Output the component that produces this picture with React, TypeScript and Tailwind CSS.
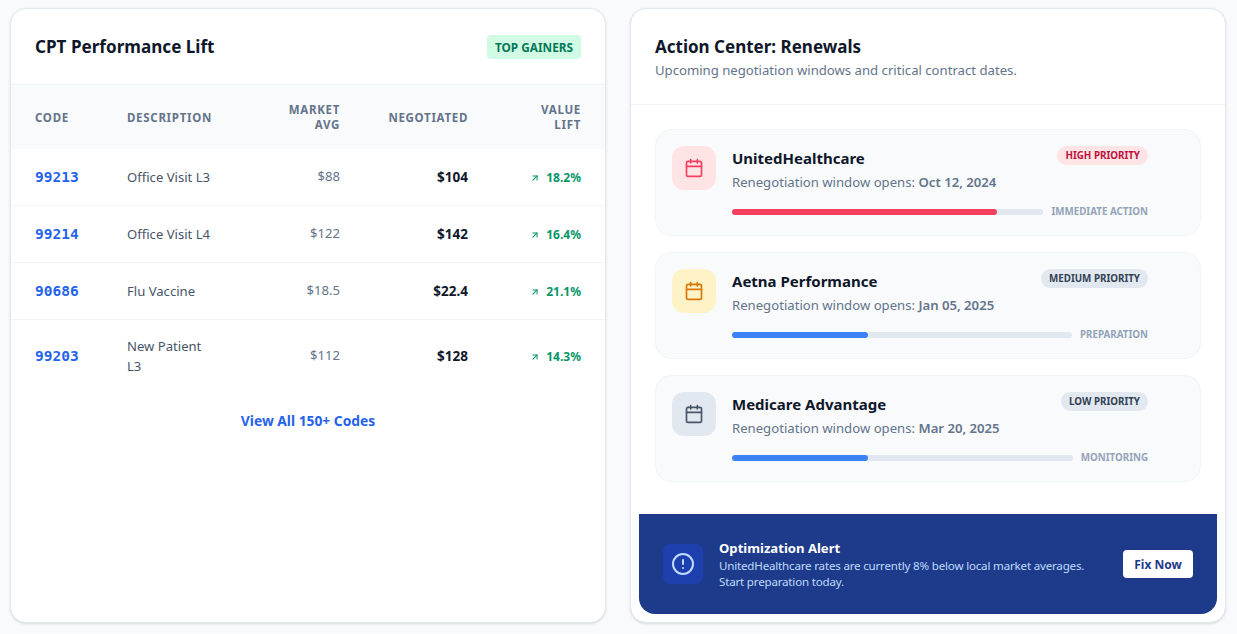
import { AlertCircle, ArrowUpRight, Calendar } from "lucide-react";

const rows = [
  { code: "99213", desc: "Office Visit L3", avg: "$88", neg: "$104", lift: "18.2%", h: "h-[56px] border-b border-slate-100" },
  { code: "99214", desc: "Office Visit L4", avg: "$122", neg: "$142", lift: "16.4%", h: "h-[57px] border-b border-slate-100" },
  { code: "90686", desc: "Flu Vaccine", avg: "$18.5", neg: "$22.4", lift: "21.1%", h: "h-[57px] border-b border-slate-100" },
  { code: "99203", desc: "New Patient L3", avg: "$112", neg: "$128", lift: "14.3%", h: "h-[73px]" },
];

const renewals = [
  {
    name: "UnitedHealthcare",
    date: "Oct 12, 2024",
    priority: "HIGH PRIORITY",
    badge: "bg-[#ffe4e6] text-[#be123c]",
    iconBox: "bg-[#ffe4e6] text-[#f43f5e]",
    bar: "bg-[#f43f5e] w-[85%]",
    label: "IMMEDIATE ACTION",
  },
  {
    name: "Aetna Performance",
    date: "Jan 05, 2025",
    priority: "MEDIUM PRIORITY",
    badge: "bg-[#e2e8f0] text-[#334155]",
    iconBox: "bg-[#fef3c7] text-[#d97706]",
    bar: "bg-[#3b82f6] w-[136px]",
    label: "PREPARATION",
  },
  {
    name: "Medicare Advantage",
    date: "Mar 20, 2025",
    priority: "LOW PRIORITY",
    badge: "bg-[#e2e8f0] text-[#334155]",
    iconBox: "bg-[#e2e8f0] text-[#475569]",
    bar: "bg-[#3b82f6] w-[136px]",
    label: "MONITORING",
  },
];

function RenewalItem({ item }: { item: any }) {
  return (
    <div className="flex h-[107px] gap-4 rounded-2xl border border-slate-100 bg-[#f8fafc] pl-4 pr-[52px] pt-4">
      <div className={`flex h-11 w-11 shrink-0 items-center justify-center rounded-xl ${item.iconBox}`}>
        <Calendar size={20} />
      </div>
      <div className="min-w-0 flex-1">
        <div className="flex items-start justify-between">
          <h3 className="pt-[2px] text-[15px] font-bold leading-[21px] text-[#0f172a]">{item.name}</h3>
          <span className={`rounded-full px-2 py-[3px] text-[9.8px] font-bold leading-[13px] ${item.badge}`}>{item.priority}</span>
        </div>
        <p className="mt-[3px] text-[13.15px] leading-5 text-[#64748b]">
          Renegotiation window opens: <span className="font-semibold">{item.date}</span>
        </p>
        <div className="mt-[13px] flex items-center gap-2">
          <div className="h-[6px] flex-1 rounded-full bg-[#e2e8f0]">
            <div className={`h-full rounded-full ${item.bar}`}></div>
          </div>
          <span className="text-[9.8px] font-bold text-[#94a3b8]">{item.label}</span>
        </div>
      </div>
    </div>
  );
}

export default function App() {
  return (
    <div className="min-h-screen bg-[#f8fafc] font-['Noto_Sans',sans-serif]">
      <div className="ml-[10px] grid h-[634px] w-[1216px] grid-cols-2 gap-6 pb-[11px] pt-2">
        {/* left card */}
        <div className="overflow-hidden rounded-2xl border border-slate-200 bg-white shadow-sm">
          <div className="flex h-[76px] items-center justify-between border-b border-slate-100 px-6">
            <h2 className="text-[17.1px] font-bold text-[#0f172a]">CPT Performance Lift</h2>
            <span className="rounded bg-[#d1fae5] px-2 py-1 text-[11.8px] font-bold leading-4 text-[#047857]">TOP GAINERS</span>
          </div>
          <table className="w-full table-fixed border-collapse">
            <colgroup>
              <col className="w-[92px]" />
              <col className="w-[133px]" />
              <col className="w-[128px]" />
              <col className="w-[128px]" />
              <col className="w-[113px]" />
            </colgroup>
            <thead>
              <tr className="h-[64px] bg-[#f8fafc] text-[11.5px] font-bold leading-[15px] tracking-[0.7px] text-[#64748b]">
                <th className="pl-6 text-left font-bold">CODE</th>
                <th className="pl-6 text-left font-bold">DESCRIPTION</th>
                <th className="pl-12 pr-6 text-right font-bold">MARKET AVG</th>
                <th className="pr-6 text-right font-bold">NEGOTIATED</th>
                <th className="pl-8 pr-6 text-right font-bold">VALUE LIFT</th>
              </tr>
            </thead>
            <tbody>
              {rows.map((r) => (
                <tr key={r.code} className={r.h}>
                  <td className="pl-6 pt-[3px] font-['DejaVu_Sans_Mono',monospace] text-[14.5px] font-bold text-[#2563eb]">{r.code}</td>
                  <td className="px-6 pt-[1px] text-[13.1px] leading-5 text-[#475569]">{r.desc}</td>
                  <td className="pr-6 pt-[1px] text-right text-[13.1px] text-[#64748b]">{r.avg}</td>
                  <td className="pr-6 pt-[1px] text-right text-[13.5px] font-bold text-[#0f172a]">{r.neg}</td>
                  <td className="pr-6 pt-[3px]">
                    <div className="flex items-center justify-end gap-1 text-[12px] font-bold text-[#059669]">
                      <ArrowUpRight size={10} strokeWidth={2.5} className="mr-[2px]" />
                      {r.lift}
                    </div>
                  </td>
                </tr>
              ))}
            </tbody>
          </table>
          <div className="pt-[19px] text-center text-[13.8px] font-bold leading-5 text-[#2563eb]">View All 150+ Codes</div>
        </div>

        {/* right card */}
        <div className="flex flex-col overflow-hidden rounded-2xl border border-slate-200 bg-white shadow-sm">
          <div className="h-[96px] border-b border-slate-100 px-6 pt-[26px]">
            <h2 className="text-[17px] font-bold leading-6 text-[#0f172a]">Action Center: Renewals</h2>
            <p className="pt-[1px] text-[13.15px] leading-5 text-[#64748b]">Upcoming negotiation windows and critical contract dates.</p>
          </div>
          <div className="flex flex-col gap-4 px-6 pt-6">
            {renewals.map((item) => (
              <RenewalItem key={item.name} item={item} />
            ))}
          </div>
          <div className="mx-2 mb-2 mt-auto flex h-[100px] items-center rounded-b-2xl bg-[#1e3a8a] px-6">
            <div className="flex h-10 w-10 shrink-0 items-center justify-center rounded-lg bg-[#1e40af] text-[#bfdbfe]">
              <AlertCircle size={24} />
            </div>
            <div className="ml-4 flex-1">
              <h4 className="pt-[1px] text-[13.1px] font-bold leading-4 text-white">Optimization Alert</h4>
              <p className="mt-[2px] w-[380px] text-[11.6px] leading-4 tracking-[-0.2px] text-[#bfdbfe]">
                UnitedHealthcare rates are currently 8% below local market averages. Start preparation today.
              </p>
            </div>
            <button className="h-7 w-[70px] rounded bg-white pt-[1px] text-[12px] font-bold text-[#1e3a8a]">Fix Now</button>
          </div>
        </div>
      </div>
    </div>
  );
}
